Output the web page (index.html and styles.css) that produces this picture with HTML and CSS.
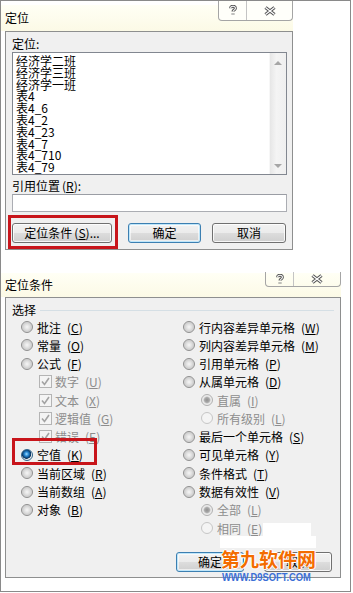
FILE: index.html
```html
<!DOCTYPE html>
<html lang="zh-CN">
<head>
  <meta charset="UTF-8">
  <title>定位 / 定位条件</title>
  <link rel="stylesheet" href="styles.css">
</head>
<body>
  <div class="frame">
    <!-- 定位 对话框 -->
    <div class="dlg dlg-goto">
      <div class="titlebar">
        <span class="title">定位</span>
        <div class="capbtns">
          <span class="cap help">
            <svg width="8" height="11" viewBox="0 0 8 11"><path d="M1.6 3.2 C1.6 0.6 6.4 0.6 6.4 3.2 C6.4 5 4 5.1 4 6.6 M4 8.6 L4 9.4" stroke="#555" stroke-width="3" fill="none"/><path d="M1.6 3.2 C1.6 0.6 6.4 0.6 6.4 3.2 C6.4 5 4 5.1 4 6.6 M4 8.6 L4 9.4" stroke="#fff" stroke-width="1.1" fill="none"/></svg>
          </span>
          <span class="cap close">
            <svg width="14" height="10" viewBox="0 0 14 10"><path d="M2.5 1.5 L11.5 8.5 M11.5 1.5 L2.5 8.5" stroke="#555" stroke-width="3.4"/><path d="M2.5 1.5 L11.5 8.5 M11.5 1.5 L2.5 8.5" stroke="#fff" stroke-width="1.2"/></svg>
          </span>
        </div>
      </div>
      <div class="panel">
        <div class="label">定位:</div>
        <div class="listbox">
          <ul class="items">
            <li>经济学二班</li>
            <li>经济学三班</li>
            <li>经济学一班</li>
            <li>表4</li>
            <li>表4_6</li>
            <li>表4_2</li>
            <li>表4_23</li>
            <li>表4_7</li>
            <li>表4_710</li>
            <li>表4_79</li>
          </ul>
          <div class="vscroll">
            <span class="arrow up"></span>
            <span class="arrow down"></span>
          </div>
        </div>
        <div class="label ref">引用位置<span class="acc">(<u>R</u>)</span>:</div>
        <div class="textbox"></div>
        <div class="btnrow">
          <div class="mark">
            <button class="btn wide">定位条件<span class="acc">(<u>S</u>)</span>...</button>
          </div>
          <button class="btn default ok">确定</button>
          <button class="btn cancel">取消</button>
        </div>
      </div>
    </div>

    <!-- 定位条件 对话框 -->
    <div class="dlg dlg-special">
      <div class="titlebar">
        <span class="title">定位条件</span>
        <div class="capbtns">
          <span class="cap help">
            <svg width="8" height="11" viewBox="0 0 8 11"><path d="M1.6 3.2 C1.6 0.6 6.4 0.6 6.4 3.2 C6.4 5 4 5.1 4 6.6 M4 8.6 L4 9.4" stroke="#555" stroke-width="3" fill="none"/><path d="M1.6 3.2 C1.6 0.6 6.4 0.6 6.4 3.2 C6.4 5 4 5.1 4 6.6 M4 8.6 L4 9.4" stroke="#fff" stroke-width="1.1" fill="none"/></svg>
          </span>
          <span class="cap close">
            <svg width="14" height="10" viewBox="0 0 14 10"><path d="M2.5 1.5 L11.5 8.5 M11.5 1.5 L2.5 8.5" stroke="#555" stroke-width="3.4"/><path d="M2.5 1.5 L11.5 8.5 M11.5 1.5 L2.5 8.5" stroke="#fff" stroke-width="1.2"/></svg>
          </span>
        </div>
      </div>
      <div class="panel">
        <div class="group-head">选择</div>
        <div class="options">
          <div class="col">
            <div class="opt"><span class="radio"></span>批注<span class="acc">(<u>C</u>)</span></div>
            <div class="opt"><span class="radio"></span>常量<span class="acc">(<u>O</u>)</span></div>
            <div class="opt"><span class="radio"></span>公式<span class="acc">(<u>F</u>)</span></div>
            <div class="opt sub off"><span class="check"><svg width="11" height="11" viewBox="0 0 11 11"><path d="M2 5.5 L4.5 8.5 L9 2" stroke="#a3a3a3" stroke-width="1.6" fill="none"/></svg></span>数字<span class="acc">(<u>U</u>)</span></div>
            <div class="opt sub off"><span class="check"><svg width="11" height="11" viewBox="0 0 11 11"><path d="M2 5.5 L4.5 8.5 L9 2" stroke="#a3a3a3" stroke-width="1.6" fill="none"/></svg></span>文本<span class="acc">(<u>X</u>)</span></div>
            <div class="opt sub off"><span class="check"><svg width="11" height="11" viewBox="0 0 11 11"><path d="M2 5.5 L4.5 8.5 L9 2" stroke="#a3a3a3" stroke-width="1.6" fill="none"/></svg></span>逻辑值<span class="acc">(<u>G</u>)</span></div>
            <div class="opt sub off"><span class="check"><svg width="11" height="11" viewBox="0 0 11 11"><path d="M2 5.5 L4.5 8.5 L9 2" stroke="#a3a3a3" stroke-width="1.6" fill="none"/></svg></span>错误<span class="acc">(<u>E</u>)</span></div>
            <div class="opt picked"><span class="radio on"></span>空值<span class="acc">(<u>K</u>)</span><span class="mark2"></span></div>
            <div class="opt"><span class="radio"></span>当前区域<span class="acc">(<u>R</u>)</span></div>
            <div class="opt"><span class="radio"></span>当前数组<span class="acc">(<u>A</u>)</span></div>
            <div class="opt"><span class="radio"></span>对象<span class="acc">(<u>B</u>)</span></div>
          </div>
          <div class="col">
            <div class="opt"><span class="radio"></span>行内容差异单元格<span class="acc">(<u>W</u>)</span></div>
            <div class="opt"><span class="radio"></span>列内容差异单元格<span class="acc">(<u>M</u>)</span></div>
            <div class="opt"><span class="radio"></span>引用单元格<span class="acc">(<u>P</u>)</span></div>
            <div class="opt"><span class="radio"></span>从属单元格<span class="acc">(<u>D</u>)</span></div>
            <div class="opt sub off"><span class="radio dim-on"></span>直属<span class="acc">(<u>I</u>)</span></div>
            <div class="opt sub off"><span class="radio dim"></span>所有级别<span class="acc">(<u>L</u>)</span></div>
            <div class="opt"><span class="radio"></span>最后一个单元格<span class="acc">(<u>S</u>)</span></div>
            <div class="opt"><span class="radio"></span>可见单元格<span class="acc">(<u>Y</u>)</span></div>
            <div class="opt"><span class="radio"></span>条件格式<span class="acc">(<u>T</u>)</span></div>
            <div class="opt"><span class="radio"></span>数据有效性<span class="acc">(<u>V</u>)</span></div>
            <div class="opt sub off"><span class="radio dim-on"></span>全部<span class="acc">(<u>L</u>)</span></div>
            <div class="opt sub off"><span class="radio dim"></span>相同<span class="acc">(<u>E</u>)</span></div>
          </div>
        </div>
        <div class="btnrow2">
          <button class="btn default">确定</button>
          <button class="btn">取消</button>
        </div>
      </div>
    </div>

    <!-- 水印 -->
    <div class="wm-a"></div>
    <div class="wm-b"></div>
    <div class="wm-cn">第九软件网</div>
    <div class="wm-en">WWW.D9SOFT.COM</div>
  </div>
</body>
</html>
```

FILE: styles.css
```css
body {
  margin: 0;
  background: #fff;
}
.frame {
  position: relative;
  width: 351px;
  height: 592px;
  box-sizing: border-box;
  border: 1px solid #8a8a8a;
  font-family: "Noto Sans CJK SC", sans-serif;
  font-size: 12px;
  color: #000;
  overflow: hidden;
}
.dlg {
  display: flex;
  flex-direction: column;
}
.dlg-goto {
  width: 292px;
}
.dlg-special {
  width: 340px;
  margin-top: 23px;
}

/* 标题栏 */
.titlebar {
  display: flex;
  justify-content: space-between;
  align-items: center;
  background: linear-gradient(to bottom, #fffff5, #fcfae6);
}
.dlg-goto .titlebar {
  height: 26px;
  margin-top: 4px;
}
.dlg-special .titlebar {
  height: 24px;
}
.title {
  padding-left: 4px;
  line-height: 16px;
}
.capbtns {
  display: flex;
  align-self: flex-start;
  box-sizing: border-box;
  border: 1px solid #a5a5a5;
  border-top: none;
  border-radius: 0 0 4px 4px;
}
.dlg-goto .capbtns {
  width: 75px;
  height: 20px;
  margin-top: -4px;
  background: #fffffa;
}
.dlg-special .capbtns {
  width: 76px;
  height: 15px;
  margin-top: -1px;
}
.cap {
  display: flex;
  align-items: center;
  justify-content: center;
}
.cap svg {
  display: block;
}
.help {
  width: 27px;
  border-right: 1px solid #c4c4c4;
}
.close {
  flex: 1;
}

/* 对话框主体 */
.panel {
  margin-left: 4px;
  box-sizing: border-box;
  background: #f0f0f0;
  border: 1px solid #8e8f8f;
}
.dlg-goto .panel {
  height: 219px;
  padding: 4px 5px 0 6px;
}
.label {
  line-height: 16px;
  height: 16px;
}
.label.ref {
  margin-top: 3px;
}
.acc {
  margin-left: 2px;
}
.listbox {
  display: flex;
  height: 123px;
  box-sizing: border-box;
  border: 1px solid #828790;
  background: #fff;
}
.items {
  flex: 1;
  list-style: none;
  margin: 0;
  padding: 2px 0 0 3px;
}
.items li {
  height: 11.8px;
  line-height: 11.8px;
}
.vscroll {
  width: 17px;
  display: flex;
  flex-direction: column;
  justify-content: space-between;
  align-items: center;
  padding: 8px 0 6px;
  box-sizing: border-box;
  background: linear-gradient(to right, #e6e6e6, #f4f4f4 40%, #efefef);
  border-left: 1px solid #f7f7f7;
}
.arrow {
  width: 0;
  height: 0;
  border-left: 4px solid transparent;
  border-right: 4px solid transparent;
}
.arrow.up {
  border-bottom: 4px solid #a6a6a6;
}
.arrow.down {
  border-top: 4px solid #a6a6a6;
}
.textbox {
  height: 18px;
  box-sizing: border-box;
  border: 1px solid #abadb3;
  border-top-color: #9a9da4;
  background: #fff;
}

/* 按钮 */
.btnrow {
  display: flex;
  align-items: flex-start;
  margin-top: 3px;
}
.mark {
  border: 3px solid #c8151b;
  padding: 5px 3px 3px 1px;
  margin-left: -4px;
}
.btn {
  height: 20px;
  box-sizing: border-box;
  padding: 0;
  font: inherit;
  line-height: 18px;
  color: #000;
  border: 1px solid #707070;
  border-radius: 3px;
  background: linear-gradient(to bottom, #f2f2f2 0%, #ebebeb 50%, #dddddd 50%, #cfcfcf 100%);
  box-shadow: inset 0 0 0 1px rgba(255, 255, 255, 0.8);
  width: 68px;
}
.btn.default {
  border-color: #3c7fb1;
  box-shadow: inset 0 0 0 1px #bfe6fa, inset 0 0 0 2px rgba(255, 255, 255, 0.6);
}
.btn.wide {
  display: block;
  width: 100px;
}
.btnrow .ok {
  width: 73px;
  margin: 8px 0 0 10px;
}
.btnrow .cancel {
  width: 74px;
  margin: 8px 0 0 11px;
}

/* 定位条件 */
.dlg-special .panel {
  height: 281px;
  padding: 4px 6px 0 6px;
}
.group-head {
  display: flex;
  align-items: center;
  line-height: 16px;
  height: 16px;
}
.group-head::after {
  content: "";
  flex: 1;
  height: 1px;
  margin-left: 4px;
  background: #d5dfe5;
}
.options {
  display: grid;
  grid-template-columns: 162px 1fr;
  padding-left: 9px;
}
.col {
  display: flex;
  flex-direction: column;
}
.opt {
  height: 18.27px;
  display: flex;
  align-items: center;
  gap: 4px;
  white-space: nowrap;
}
.opt.sub {
  padding-left: 18px;
}
.opt.off {
  color: #8d8d8d;
}
.radio {
  width: 12px;
  height: 12px;
  flex: none;
  box-sizing: border-box;
  border-radius: 50%;
  border: 1px solid #8f8f8f;
  background: radial-gradient(circle, #f6f6f6 0, #e2e2e2 35%, #d0d0d0 60%, #f3f3f3 100%);
}
.radio.on {
  border-color: #2c628b;
  background: radial-gradient(circle at 45% 40%, #9fdcff 0, #2a8ad4 25%, #0e4d86 45%, #0a2f55 55%, #e9e9e9 62%, #f5f5f5 100%);
}
.radio.dim {
  border-color: #c6c6c6;
  background: #f4f4f4;
}
.radio.dim-on {
  border-color: #b0b0b0;
  background: radial-gradient(circle, #8f8f8f 0, #a9a9a9 35%, #e9e9e9 55%, #f4f4f4 100%);
}
.check {
  width: 13px;
  height: 13px;
  flex: none;
  box-sizing: border-box;
  border: 1px solid #b4b4b4;
  background: #f4f4f4;
  display: flex;
  align-items: center;
  justify-content: center;
  margin-right: -1px;
}
.check svg {
  display: block;
}
.picked {
  position: relative;
}
.mark2 {
  position: absolute;
  left: -9px;
  top: -8px;
  width: 85px;
  height: 27px;
  box-sizing: border-box;
  border: 3px solid #c8151b;
}
.btnrow2 {
  display: flex;
  justify-content: flex-end;
  gap: 20px;
  margin-top: 15px;
  padding-right: 2px;
}

/* 水印 */
.wm-a,
.wm-b,
.wm-cn,
.wm-en {
  position: absolute;
}
.wm-a {
  left: 262px;
  top: 522px;
  width: 48px;
  height: 14px;
  background: #fff;
}
.wm-b {
  left: 219px;
  top: 535px;
  width: 96px;
  height: 12px;
  background: #fff;
}
.wm-cn {
  left: 220px;
  top: 546px;
  font-size: 19px;
  font-weight: bold;
  line-height: 24px;
  color: #f36c00;
  text-shadow: 1px 0 #fff, -1px 0 #fff, 0 1px #fff, 0 -1px #fff;
}
.wm-en {
  left: 221px;
  top: 571px;
  font-family: "Liberation Sans", Arial, sans-serif;
  font-size: 11px;
  font-weight: bold;
  line-height: 11px;
  color: #3b6fd6;
  transform: scaleX(0.85);
  transform-origin: left top;
}
```
